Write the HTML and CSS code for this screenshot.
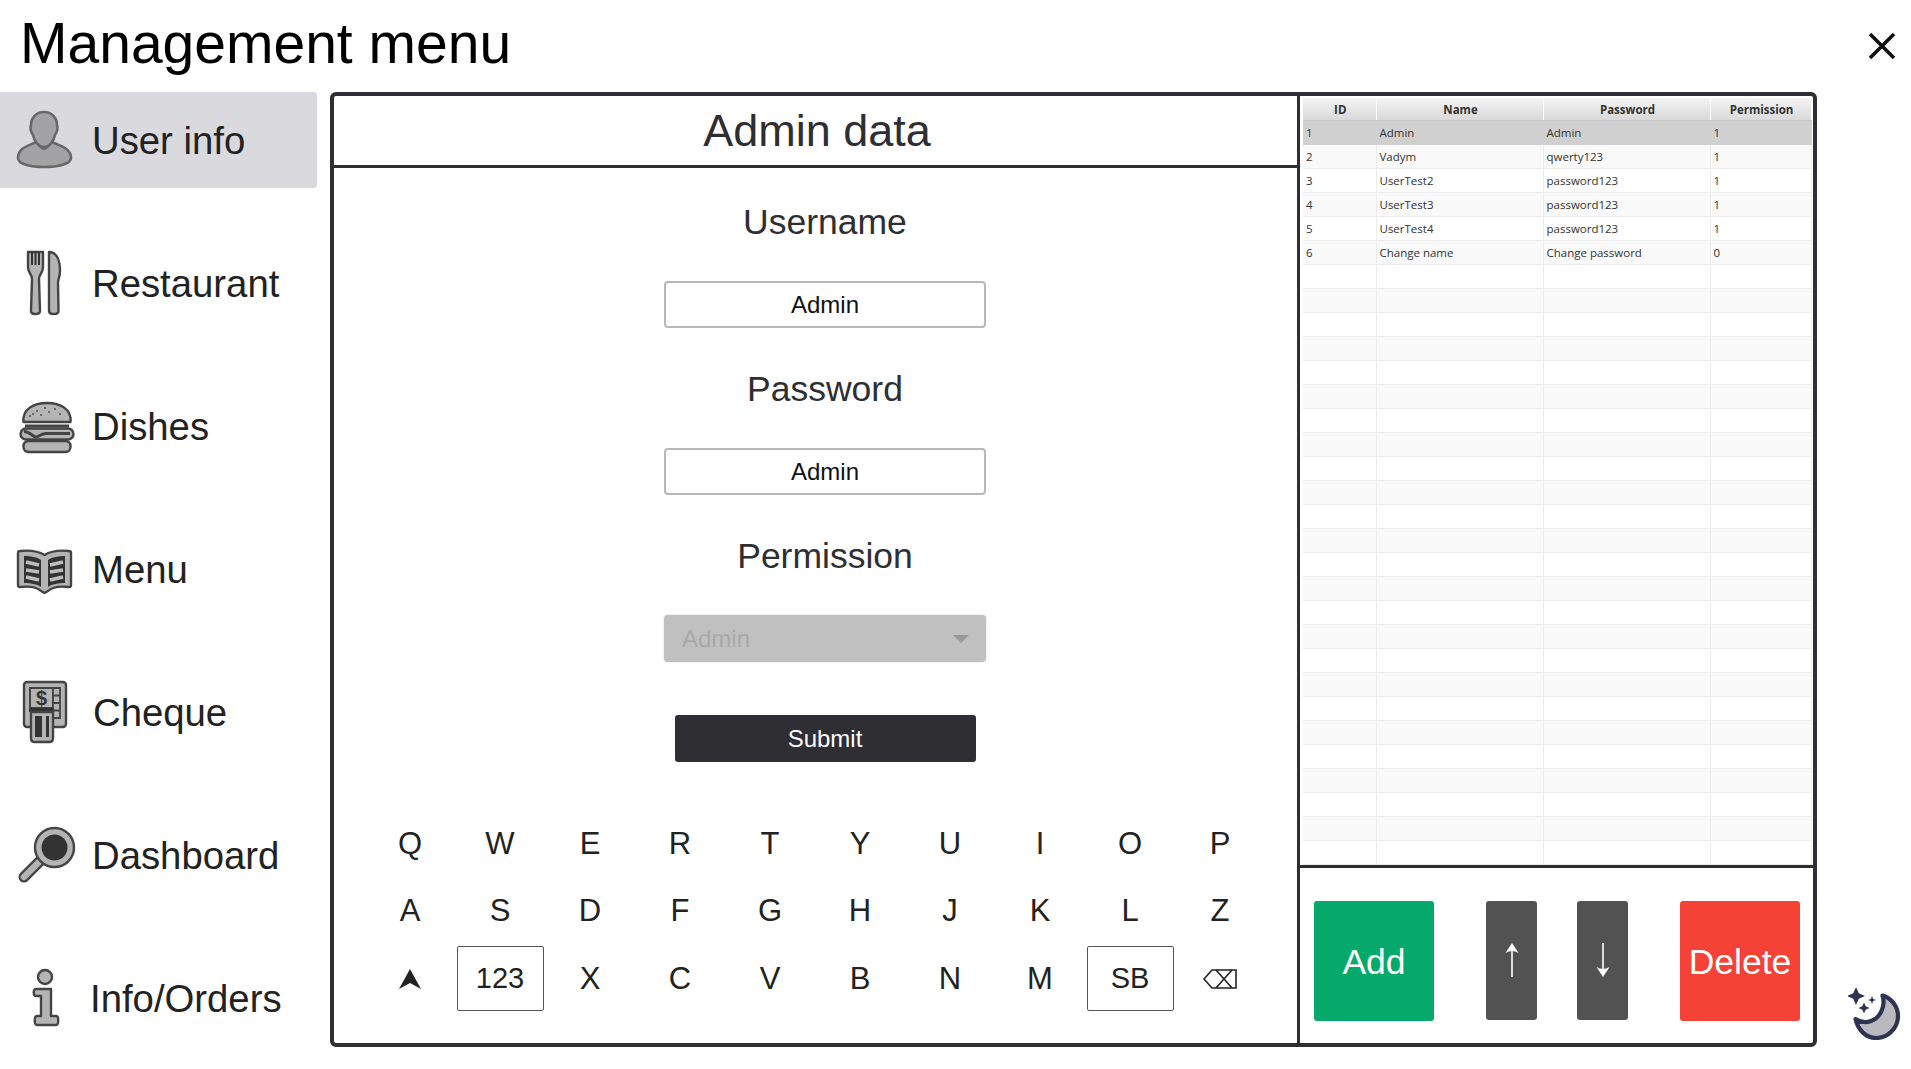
FILE: index.html
```html
<!DOCTYPE html>
<html lang="en">
<head>
<meta charset="utf-8">
<title>Management menu</title>
<link rel="stylesheet" href="styles.css">
</head>
<body>
<div class="app">
  <header class="topbar">
    <h1 class="page-title">Management menu</h1>
    <button class="close" aria-label="Close">
      <svg viewBox="0 0 28 28" width="28" height="28"><path d="M2 2 L26 26 M26 2 L2 26" class="close-x"/></svg>
    </button>
  </header>
  <div class="main">
    <nav class="sidebar">
      <a class="nav-item nav-item--active">
        <svg class="nav-icon" viewBox="0 0 93 96">
          <path class="i-user" d="M18 66 C18 56 28 54 36 50 L52 50 C60 54 71 56 71 66 C71 72 58 75 44 75 C30 75 18 72 18 66 Z"/>
          <path class="i-user-d" d="M35 47 C37 54 41 58 44 58 C47 58 51 54 53 47 L53 44 L35 44 Z"/>
          <path class="i-user" d="M44 20 C36 20 31 26 31 33 C30 36 31 40 33 43 C34 48 38 55 44 55 C50 55 54 48 55 43 C57 40 58 36 57 33 C57 26 52 20 44 20 Z"/>
        </svg>
        <span>User info</span>
      </a>
      <a class="nav-item">
        <svg class="nav-icon" viewBox="0 0 93 96">
          <path class="i-fill" d="M28 17 L43 17 L43 32 C43 38 39 39 39 44 L40 76 C40 80 31 80 31 76 L32 44 C32 39 28 38 28 32 Z"/>
          <path class="i-line" d="M32 17 V30 M35.5 17 V30 M39 17 V30"/>
          <path class="i-fill" d="M49 17 C56 17 60 24 60 36 C60 42 58 44 58 48 L58.5 76 C58.5 80 49 80 49 76 Z"/>
        </svg>
        <span>Restaurant</span>
      </a>
      <a class="nav-item">
        <svg class="nav-icon" viewBox="0 0 93 96">
          <path class="i-fill" d="M23.5 44 C22 31 34 25 47 25 C60 25 72 31 70.5 44 Z"/>
          <path class="i-dark-line" d="M25 48 H69"/>
          <rect class="i-fill" x="20.500" y="50.500" width="53" height="11" rx="5.500"/>
          <path class="i-dark-line" d="M24 53.500 C30 53.500 33 59 36 59 C39 59 41 55.500 46 55.500 L70 55.500"/>
          <rect class="i-fill" x="23.500" y="63" width="47" height="11" rx="5"/>
          <path class="i-seed" d="M33 36 h.1 M37 33 h.1 M41 37 h.1 M45 30 h.1 M49 34 h.1 M55 31 h.1 M60 36 h.1 M30 38 h.1"/>
        </svg>
        <span>Dishes</span>
      </a>
      <a class="nav-item">
        <svg class="nav-icon" viewBox="0 0 93 96">
          <path class="i-fill" d="M18 32 C18 30 19 30 20 30 C30 29 38 30 44.5 34 C51 30 59 29 69 30 C70 30 71 30 71 32 L71 64 C71 66 70 66 69 66 C60 65 52 66 48 70 L44.5 72 L41 70 C37 66 29 65 20 66 C19 66 18 66 18 64 Z"/>
          <path class="i-page" d="M24 35 C30 35 37 36 41 39 L41 66 C37 63 30 62 24 62 Z"/>
          <path class="i-page" d="M65 35 C59 35 52 36 48 39 L48 66 C52 63 59 62 65 62 Z"/>
          <path class="i-stripe" d="M26 41 L39 44 M26 49 L39 51 M26 56 L39 59 M63 41 L50 44 M63 49 L50 51 M63 56 L50 59"/>
        </svg>
        <span>Menu</span>
      </a>
      <a class="nav-item nav-item--cheque">
        <svg class="nav-icon" viewBox="0 0 93 96">
          <rect class="i-fill" x="24" y="18" width="42" height="45" rx="3"/>
          <rect class="i-screen" x="30" y="24" width="23" height="20"/>
          <text class="i-dollar" x="41.5" y="41">$</text>
          <path class="i-cells" d="M53 24 H60 V54 H53 Z M53 31.5 H60 M53 39 H60 M53 46.5 H60"/>
          <rect class="i-dark" x="29" y="44" width="25" height="4"/>
          <path class="i-fill" d="M31 48 H53 V74 C53 77 52 78 50 78 H34 C32 78 31 77 31 74 Z"/>
          <rect class="i-dark" x="35" y="52" width="7" height="21"/>
          <rect class="i-dark" x="46" y="52" width="3" height="21"/>
        </svg>
        <span>Cheque</span>
      </a>
      <a class="nav-item">
        <svg class="nav-icon" viewBox="0 0 93 96">
          <path class="i-handle-o" d="M41 53 L24 70"/>
          <path class="i-handle" d="M41 53 L24 70"/>
          <circle class="i-fill" cx="54.5" cy="40.5" r="19.5"/>
          <circle class="i-lens" cx="54.5" cy="40.5" r="13"/>
        </svg>
        <span>Dashboard</span>
      </a>
      <a class="nav-item nav-item--info">
        <svg class="nav-icon" viewBox="0 0 93 96">
          <circle class="i-fill" cx="45" cy="27" r="7"/>
          <path class="i-fill" d="M36 39 H51 V66 H56 C59 66 59 75 56 75 H37 C34 75 34 66 37 66 H41 V46 H36 C33 46 33 39 36 39 Z"/>
        </svg>
        <span>Info/Orders</span>
      </a>
    </nav>
    <section class="panel">
      <div class="editor">
        <h2 class="editor-title">Admin data</h2>
        <form class="form">
          <label class="field-label">Username</label>
          <div class="input">Admin</div>
          <label class="field-label">Password</label>
          <div class="input">Admin</div>
          <label class="field-label">Permission</label>
          <div class="select"><span>Admin</span><i class="select-arrow"></i></div>
          <div class="submit">Submit</div>
        </form>
        <div class="keyboard">
          <span class="key">Q</span><span class="key">W</span><span class="key">E</span><span class="key">R</span><span class="key">T</span><span class="key">Y</span><span class="key">U</span><span class="key">I</span><span class="key">O</span><span class="key">P</span>
          <span class="key">A</span><span class="key">S</span><span class="key">D</span><span class="key">F</span><span class="key">G</span><span class="key">H</span><span class="key">J</span><span class="key">K</span><span class="key">L</span><span class="key">Z</span>
          <span class="key"><svg viewBox="0 0 24 20" width="24" height="20"><path class="k-shift" d="M12 0 L23 20 L12 14 L1 20 Z"/></svg></span>
          <span class="key key--boxed">123</span><span class="key">X</span><span class="key">C</span><span class="key">V</span><span class="key">B</span><span class="key">N</span><span class="key">M</span>
          <span class="key key--boxed">SB</span>
          <span class="key"><svg viewBox="0 0 34 20" width="34" height="20"><path class="k-back" d="M1 10 L9 1 H33 V19 H9 Z M13 1 L29 19 M29 1 L13 19"/></svg></span>
        </div>
      </div>
      <div class="side">
        <table class="grid">
          <colgroup><col class="c-id"><col class="c-name"><col class="c-pass"><col class="c-perm"></colgroup>
          <thead><tr><th>ID</th><th>Name</th><th>Password</th><th>Permission</th></tr></thead>
          <tbody>
            <tr class="selected"><td>1</td><td>Admin</td><td>Admin</td><td>1</td></tr>
            <tr><td>2</td><td>Vadym</td><td>qwerty123</td><td>1</td></tr>
            <tr><td>3</td><td>UserTest2</td><td>password123</td><td>1</td></tr>
            <tr><td>4</td><td>UserTest3</td><td>password123</td><td>1</td></tr>
            <tr><td>5</td><td>UserTest4</td><td>password123</td><td>1</td></tr>
            <tr><td>6</td><td>Change name</td><td>Change password</td><td>0</td></tr>
            <tr><td></td><td></td><td></td><td></td></tr><tr><td></td><td></td><td></td><td></td></tr><tr><td></td><td></td><td></td><td></td></tr><tr><td></td><td></td><td></td><td></td></tr><tr><td></td><td></td><td></td><td></td></tr>
            <tr><td></td><td></td><td></td><td></td></tr><tr><td></td><td></td><td></td><td></td></tr><tr><td></td><td></td><td></td><td></td></tr><tr><td></td><td></td><td></td><td></td></tr><tr><td></td><td></td><td></td><td></td></tr>
            <tr><td></td><td></td><td></td><td></td></tr><tr><td></td><td></td><td></td><td></td></tr><tr><td></td><td></td><td></td><td></td></tr><tr><td></td><td></td><td></td><td></td></tr><tr><td></td><td></td><td></td><td></td></tr>
            <tr><td></td><td></td><td></td><td></td></tr><tr><td></td><td></td><td></td><td></td></tr><tr><td></td><td></td><td></td><td></td></tr><tr><td></td><td></td><td></td><td></td></tr><tr><td></td><td></td><td></td><td></td></tr>
            <tr><td></td><td></td><td></td><td></td></tr><tr><td></td><td></td><td></td><td></td></tr><tr><td></td><td></td><td></td><td></td></tr><tr><td></td><td></td><td></td><td></td></tr><tr><td></td><td></td><td></td><td></td></tr>
          </tbody>
        </table>
        <div class="actions">
          <button class="btn btn--add"><span class="btn-label">Add</span></button>
          <div class="move">
            <button class="btn btn--move" aria-label="Move up">
              <svg viewBox="0 0 14 34" width="14" height="34"><path class="arrow-line" d="M7 4 V34"/><path class="arrow-head" d="M7 0 L13.500 10 Q7 6 .500 10 Z"/></svg>
            </button>
            <button class="btn btn--move" aria-label="Move down">
              <svg viewBox="0 0 14 34" width="14" height="34"><path class="arrow-line" d="M7 0 V30"/><path class="arrow-head" d="M7 34 L13.500 24 Q7 28 .500 24 Z"/></svg>
            </button>
          </div>
          <button class="btn btn--delete"><span class="btn-label">Delete</span></button>
        </div>
      </div>
    </section>
  </div>
  <button class="theme" aria-label="Toggle theme">
    <svg viewBox="0 0 52 52" width="52" height="52">
      <path class="m-moon" d="M34.5 7.5 C43 10 50 18 50 28 C50 40 40 50 28 50 C18 50 10 42 7.5 31 C12 34 18 35 23 33 C32 30 38 18 34.5 7.5 Z"/>
      <path class="m-star" d="M8 -1 L10.800 5.200 L17 8 L10.800 10.800 L8 17 L5.200 10.800 L-1 8 L5.200 5.200 Z"/>
      <path class="m-star" d="M16 14.500 L17.700 18.300 L21.500 20 L17.700 21.700 L16 25.500 L14.300 21.700 L10.500 20 L14.300 18.300 Z"/>
      <path class="m-star" d="M24 8 L25.100 10.900 L28 12 L25.100 13.100 L24 16 L22.900 13.100 L20 12 L22.900 10.900 Z"/>
    </svg>
  </button>
</div>
</body>
</html>
```
FILE: styles.css
```css
* { box-sizing: border-box; }
html, body { margin: 0; padding: 0; background: #fff; }
body { font-family: "Liberation Sans", Arial, sans-serif; color: #222; overflow: hidden; }
button { font-family: inherit; border: 0; padding: 0; background: none; }

.app { position: relative; width: 1911px; height: 1069px; }

.topbar { display: flex; align-items: center; justify-content: space-between; height: 92px; padding: 0 15px 6px 20px; }
.page-title { margin: 0; font-size: 57px; font-weight: 400; color: #000; line-height: 64px; }
.close { display: flex; width: 28px; height: 28px; margin-top: 6px; }
.close-x { stroke: #111; stroke-width: 3.6; fill: none; }

.main { display: flex; gap: 13px; align-items: flex-start; }

.sidebar { display: flex; flex-direction: column; gap: 47px; width: 317px; }
.nav-item { display: flex; align-items: center; height: 96px; font-size: 38.3px; color: #222; border-radius: 0 4px 4px 0; }
.nav-item span { margin-top: 2px; }
.nav-item--active { background: #d9d9de; }
.nav-item--cheque span { margin-left: 1px; }
.nav-item--info span { margin-left: -2px; }
.nav-icon { flex: none; width: 93px; height: 96px; margin-right: -1px; }

.i-fill { fill: #b4b4b4; stroke: #444; stroke-width: 2.4; stroke-linejoin: round; }
.i-user { fill: #a3a3a6; stroke: #68686a; stroke-width: 2.6; stroke-linejoin: round; }
.i-user-d { fill: #68686a; }
.i-line { stroke: #333; stroke-width: 2; fill: none; }
.i-dark-line { stroke: #444; stroke-width: 3; fill: none; }
.i-seed { stroke: #555; stroke-width: 2; stroke-linecap: round; fill: none; }
.i-page { fill: #333; }
.i-stripe { stroke: #bdbdbd; stroke-width: 3.6; fill: none; }
.i-screen { fill: #b4b4b4; stroke: #444; stroke-width: 2; }
.i-cells { fill: #b4b4b4; stroke: #444; stroke-width: 1.8; }
.i-dark { fill: #333; }
.i-dollar { font-family: "Liberation Sans", Arial, sans-serif; font-size: 20px; font-weight: 700; fill: #333; text-anchor: middle; }
.i-handle-o { stroke: #444; stroke-width: 11; stroke-linecap: round; fill: none; }
.i-handle { stroke: #b4b4b4; stroke-width: 6.5; stroke-linecap: round; fill: none; }
.i-lens { fill: #333; }

.panel { display: flex; width: 1487px; height: 955px; border: 4px solid #2e2e33; border-radius: 6px; }
.editor { display: flex; flex-direction: column; width: 966px; border-right: 3px solid #2e2e33; }
.editor-title { height: 72px; margin: 0; padding: 0 0 0 3px; border-bottom: 3px solid #2e2e33; font-size: 45px; font-weight: 400; line-height: 70px; text-align: center; color: #2e2e33; }

.form { display: flex; flex-direction: column; align-items: center; padding: 34px 0 0 19px; }
.field-label { height: 40px; margin-bottom: 39px; font-size: 35.5px; line-height: 40px; color: #2e2e33; }
.input { width: 322px; height: 47px; margin-bottom: 41px; border: 2px solid #b8b8b8; border-radius: 4px; font-size: 24px; line-height: 43px; text-align: center; color: #111; }
.select { display: flex; align-items: center; justify-content: space-between; width: 322px; height: 47px; padding: 0 17px 0 18px; background: #c0c0c0; border-radius: 4px; box-shadow: 0 0 2px #ccc; font-size: 24px; color: #a9a9a9; }
.select-arrow { width: 0; height: 0; border: 8px solid transparent; border-top: 8px solid #999; border-bottom: 0; }
.submit { width: 301px; height: 47px; margin-top: 53px; background: #2e2e33; border-radius: 3px; color: #fff; font-size: 24px; line-height: 47px; text-align: center; }

.keyboard { display: grid; grid-template-columns: repeat(10, 90px); grid-auto-rows: 67.5px; margin: 48px 0 0 31px; }
.key { display: flex; align-items: center; justify-content: center; font-size: 31px; color: #222; }
.key--boxed { width: 87px; height: 65px; margin-top: -1px; place-self: center; border: 1.5px solid #555; border-radius: 2px; font-size: 29px; }
.k-shift { fill: #222; }
.k-back { fill: none; stroke: #222; stroke-width: 1.6; }

.side { display: flex; flex: 1; flex-direction: column; min-width: 0; }
.grid { flex: none; width: 508px; margin: 2px 0 0 3px; border-collapse: collapse; table-layout: fixed; font-family: "Open Sans", sans-serif; font-size: 11.5px; color: #333; }
.c-id { width: 73px; } .c-name { width: 167px; } .c-pass { width: 167px; } .c-perm { width: 101px; }
.grid th { height: 22px; padding: 1px 0 0 2px; background: linear-gradient(#f3f3f3, #d9d9d9); border-right: 1px solid #fff; border-bottom: 1px solid #c8c8c8; font-weight: 700; color: #333; }
.grid td { height: 24px; padding: 0 3px; border-right: 1px solid #ececec; border-bottom: 1px solid #ececec; overflow: hidden; white-space: nowrap; }
.grid tbody tr:nth-child(even) td { background: #f9f9f9; }
.grid tbody tr.selected td { background: #d0d0d0; border-color: #d0d0d0; }

.actions { display: flex; justify-content: space-between; align-items: flex-start; flex: 1; padding: 33px 13px 0 14px; border-top: 3px solid #2e2e33; }
.move { display: flex; gap: 40px; }
.btn { display: flex; align-items: center; justify-content: center; height: 120px; border-radius: 3px; color: #fff; font-size: 35.5px; }
.btn-label { padding-top: 4px; }
.btn--add { width: 120px; background: #06a96c; }
.btn--delete { width: 120px; background: #f44336; }
.btn--move { width: 51px; height: 119px; background: #525252; }
.arrow-line { stroke: #fff; stroke-width: 1.6; fill: none; }
.arrow-head { fill: #fff; }

.theme { position: absolute; left: 1848px; top: 988px; width: 52px; height: 52px; }
.m-moon { fill: #b9b9bf; stroke: #2e3350; stroke-width: 4.2; stroke-linejoin: round; }
.m-star { fill: #2e3350; }
```
